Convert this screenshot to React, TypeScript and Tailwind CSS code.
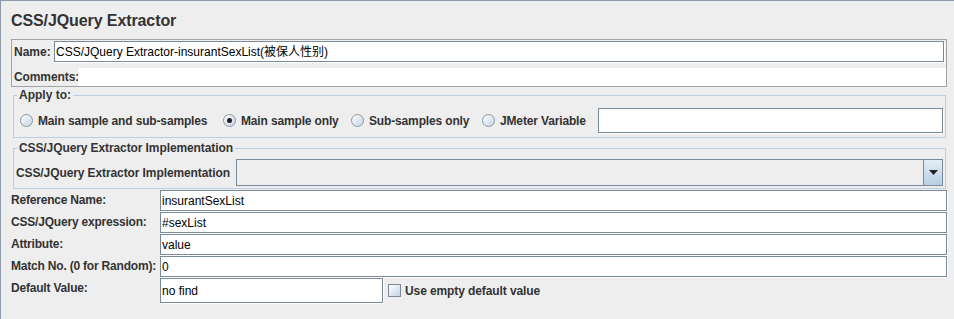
import type { ReactNode } from "react";

const fieldBox = "border border-[#7a8a99] bg-white shadow-[1px_1px_0_#ffffff]";

function Radio({ checked, label, width }: { checked?: boolean; label: string; width: string }) {
  return (
    <div className={`flex shrink-0 items-center gap-[5px] whitespace-nowrap ${width}`}>
      <span className="flex h-[13px] w-[13px] shrink-0 items-center justify-center rounded-full border border-[#8a96a3] bg-linear-to-br from-white to-[#c6d4e2]">
        {checked ? <span className="h-[5px] w-[5px] rounded-full bg-[#222222]" /> : null}
      </span>
      <span className="font-bold leading-[14px] tracking-[-0.15px]">{label}</span>
    </div>
  );
}

function Row({ label, value, children }: { label: string; value: string; children?: ReactNode }) {
  return (
    <div className="flex items-start">
      <div className="w-[149px] whitespace-nowrap font-bold leading-[20px] tracking-[-0.2px]">{label}</div>
      {children ?? (
        <div className={`mr-[7px] mb-[1px] flex h-[21px] flex-1 items-center pl-[1px] pt-[1px] text-black ${fieldBox}`}>
          {value}
        </div>
      )}
    </div>
  );
}

export default function App() {
  return (
    <div className="h-[319px] w-[954px] border-t border-l border-[#8d99a6] bg-[#eeeeee] font-['Liberation_Sans',Arial,'Noto_Sans_CJK_SC',sans-serif] text-[12px] text-[#333333]">
      <div className="h-[38px] pl-[10px] pt-[10px] text-[16px] font-bold leading-[20px] tracking-[-0.1px]">CSS/JQuery Extractor</div>

      <div className="ml-[10px] w-[936px] border border-[#a3a3a3] p-[1px] pb-0">
        <div className="flex items-center">
          <div className="w-[41px] pl-[1px] font-bold">Name:</div>
          <div className={`mr-[1px] flex h-[21px] flex-1 items-center pl-[1px] pt-[1px] text-black ${fieldBox}`}>
            CSS/JQuery Extractor-insurantSexList(被保人性别)
          </div>
        </div>
        <div className="mt-[6px] -mr-[1px] flex h-[18px] items-center">
          <div className="w-[65px] whitespace-nowrap pl-[1px] font-bold tracking-[-0.1px]">Comments:</div>
          <div className="h-full flex-1 bg-white" />
        </div>
      </div>

      <fieldset className="mt-[1px] ml-[12px] w-[933px] border border-[#b8cfe5] px-0 pt-[6px] pb-[4px]">
        <legend className="ml-[3px] px-[2px] font-bold leading-[14px]">Apply to:</legend>
        <div className="flex items-center pl-[6px] pr-[2px]">
          <Radio width="w-[203px]" label="Main sample and sub-samples" />
          <Radio width="w-[128px]" checked label="Main sample only" />
          <Radio width="w-[131px]" label="Sub-samples only" />
          <Radio width="w-[116px]" label="JMeter Variable" />
          <div className={`h-[25px] flex-1 ${fieldBox}`} />
        </div>
      </fieldset>

      <fieldset className="mt-[3px] ml-[12px] w-[933px] border border-[#b8cfe5] px-0 pt-[4px] pb-[2px]">
        <legend className="ml-[3px] px-[2px] font-bold leading-[14px] tracking-[-0.1px]">CSS/JQuery Extractor Implementation</legend>
        <div className="flex items-center pl-[2px] pr-[2px]">
          <div className="w-[220px] whitespace-nowrap font-bold tracking-[-0.1px]">CSS/JQuery Extractor Implementation</div>
          <div className="flex h-[27px] flex-1 border border-[#7a8a99] bg-[#eeeeee]">
            <div className="flex-1" />
            <div className="flex w-[19px] items-center justify-center border-l border-[#7a8a99] bg-linear-to-b from-[#e4edf6] to-[#b8cfe5]">
              <svg width="9" height="5" viewBox="0 0 9 5">
                <path d="M0 0h9L4.5 5z" fill="#222222" />
              </svg>
            </div>
          </div>
        </div>
      </fieldset>

      <div className="mt-[1px] flex flex-col pl-[10px]">
        <Row label="Reference Name:" value="insurantSexList" />
        <Row label="CSS/JQuery expression:" value="#sexList" />
        <Row label="Attribute:" value="value" />
        <Row label="Match No. (0 for Random):" value="0" />
        <Row label="Default Value:" value="no find">
          <div className="flex items-center">
            <div className={`flex h-[25px] w-[223px] items-center pl-[1px] pt-[1px] text-black ${fieldBox}`}>no find</div>
            <span className="ml-[5px] h-[13px] w-[13px] border border-[#7a8a99] bg-linear-to-br from-white to-[#c6d4e2]" />
            <span className="ml-[4px] whitespace-nowrap font-bold tracking-[-0.1px]">Use empty default value</span>
          </div>
        </Row>
      </div>
    </div>
  );
}
